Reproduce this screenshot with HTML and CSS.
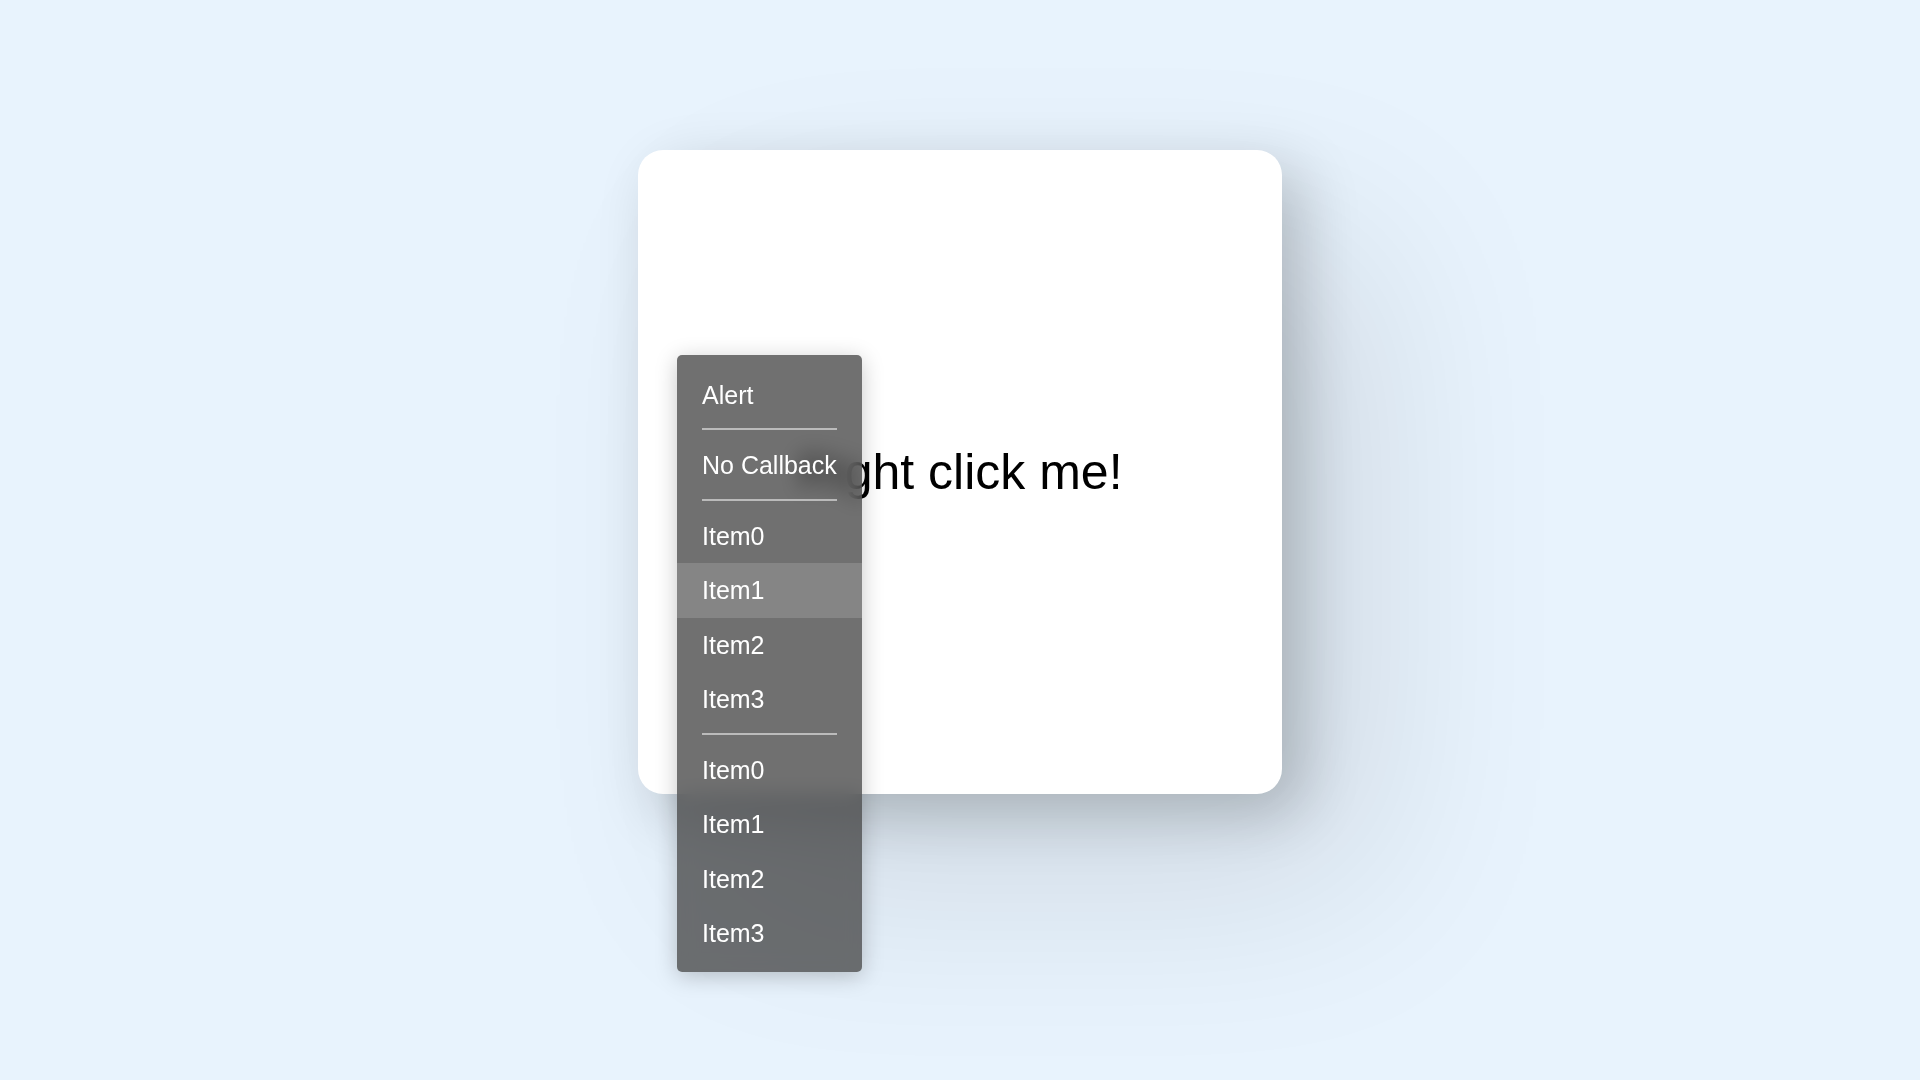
FILE: index.html
```html
<!DOCTYPE html>
<html lang="en">
<head>
<meta charset="utf-8">
<title>Context menu</title>
<link rel="stylesheet" href="styles.css">
</head>
<body>
<main class="stage">
  <div class="card">
    <p class="title">Right click me!</p>
  </div>
</main>
<ul class="menu">
  <li class="menu-item">Alert</li>
  <li class="menu-sep"></li>
  <li class="menu-item">No Callback</li>
  <li class="menu-sep"></li>
  <li class="menu-item">Item0</li>
  <li class="menu-item is-hover">Item1</li>
  <li class="menu-item">Item2</li>
  <li class="menu-item">Item3</li>
  <li class="menu-sep"></li>
  <li class="menu-item">Item0</li>
  <li class="menu-item">Item1</li>
  <li class="menu-item">Item2</li>
  <li class="menu-item">Item3</li>
</ul>
</body>
</html>
```

FILE: styles.css
```css
html, body {
  margin: 0;
  padding: 0;
}

body {
  width: 1920px;
  height: 1080px;
  overflow: hidden;
  background: #e8f3fd;
  font-family: "Liberation Sans", Arial, sans-serif;
}

.stage {
  display: flex;
  justify-content: center;
  padding-top: 150px;
}

.card {
  width: 644px;
  height: 644px;
  background: #ffffff;
  border-radius: 25px;
  display: flex;
  align-items: center;
  justify-content: center;
  box-shadow:
    20px 20px 60px rgba(0, 0, 0, 0.2),
    90px 90px 200px rgba(0, 0, 0, 0.11);
}

.title {
  margin: 0;
  font-size: 50px;
  color: #000000;
}

.menu {
  position: absolute;
  left: 677px;
  top: 355px;
  margin: 0;
  padding: 12.5px 0 11.5px;
  list-style: none;
  width: max-content;
  background: rgba(64, 64, 64, 0.75);
  -webkit-backdrop-filter: blur(10px);
  backdrop-filter: blur(10px);
  border-radius: 5px;
  box-shadow: 0 4px 22px rgba(0, 0, 0, 0.22);
  color: #ffffff;
  font-size: 25px;
}

.menu-item {
  padding: 13px 25px;
  line-height: 28.5px;
  white-space: nowrap;
}

.menu-item.is-hover {
  background: rgba(255, 255, 255, 0.15);
}

.menu-sep {
  height: 2px;
  margin: 6px 25px 8px;
  background: rgba(255, 255, 255, 0.52);
}
```
